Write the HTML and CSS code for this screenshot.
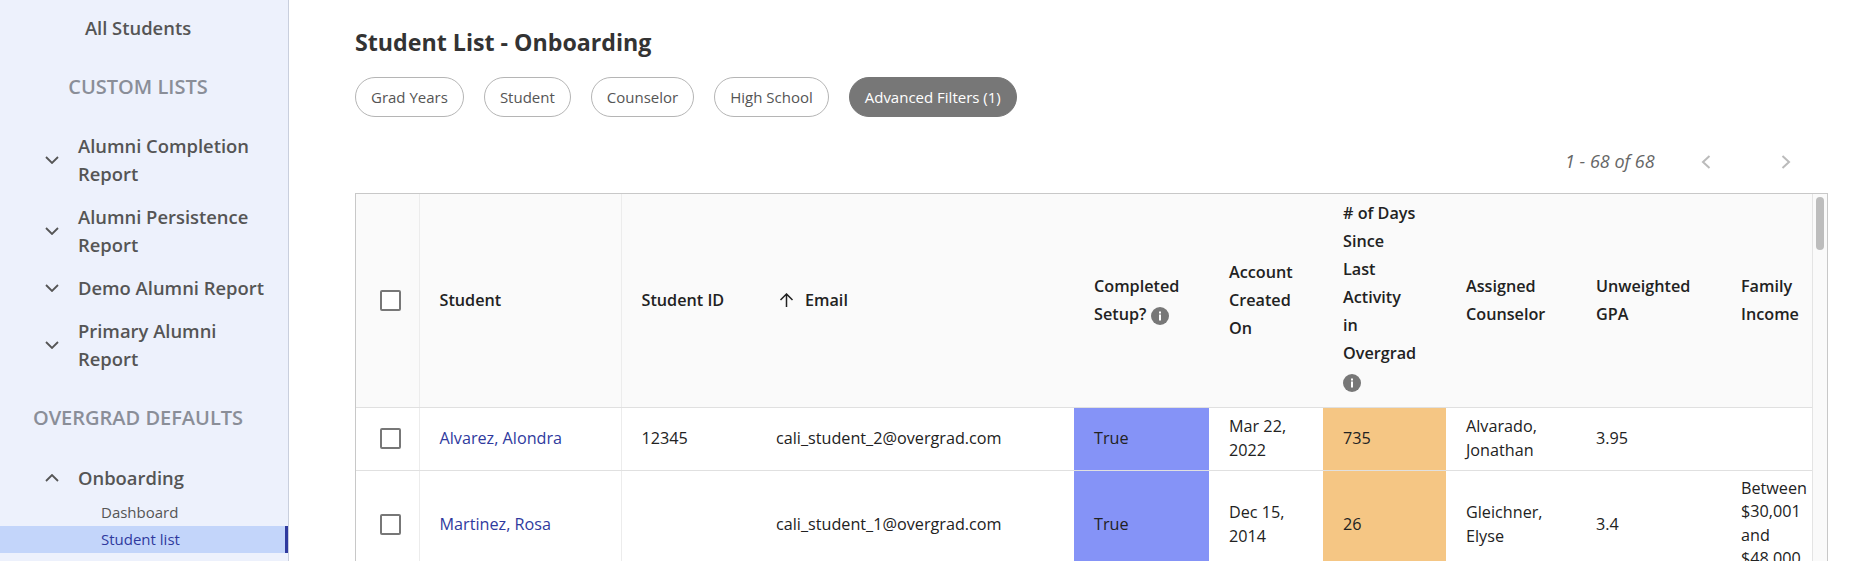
FILE: index.html
```html
<!DOCTYPE html>
<html lang="en">
<head>
    <meta charset="UTF-8">
    <title>Student List - Onboarding</title>
    <link rel="stylesheet" href="styles.css">
</head>
<body>
<div class="page">
    <aside class="sidebar">
        <a class="all-students">All Students</a>
        <div class="group-title custom">CUSTOM LISTS</div>
        <div class="nav-item"><svg class="chev" viewBox="0 0 14 8"><path d="M1 1l6 6 6-6"/></svg><span>Alumni Completion Report</span></div>
        <div class="nav-item"><svg class="chev" viewBox="0 0 14 8"><path d="M1 1l6 6 6-6"/></svg><span>Alumni Persistence Report</span></div>
        <div class="nav-item"><svg class="chev" viewBox="0 0 14 8"><path d="M1 1l6 6 6-6"/></svg><span>Demo Alumni Report</span></div>
        <div class="nav-item"><svg class="chev" viewBox="0 0 14 8"><path d="M1 1l6 6 6-6"/></svg><span>Primary Alumni Report</span></div>
        <div class="group-title defaults">OVERGRAD DEFAULTS</div>
        <div class="nav-item"><svg class="chev" viewBox="0 0 14 8"><path d="M1 7l6-6 6 6"/></svg><span>Onboarding</span></div>
        <a class="sub-item">Dashboard</a>
        <a class="sub-item active">Student list</a>
    </aside>

    <main class="content">
        <h1 class="title">Student List - Onboarding</h1>
        <div class="filters">
            <button class="chip">Grad Years</button>
            <button class="chip">Student</button>
            <button class="chip">Counselor</button>
            <button class="chip">High School</button>
            <button class="chip chip-on">Advanced Filters (1)</button>
        </div>
        <div class="pager">
            <span class="pager-text">1 - 68 of 68</span>
            <svg class="pager-arrow prev" viewBox="0 0 10 14"><path d="M8.5 1L2 7l6.5 6"/></svg>
            <svg class="pager-arrow next" viewBox="0 0 10 14"><path d="M1.5 1L8 7l-6.5 6"/></svg>
        </div>

        <div class="table-box">
            <table class="students">
                <colgroup>
                    <col class="c-check"><col class="c-student"><col class="c-id"><col class="c-email">
                    <col class="c-setup"><col class="c-created"><col class="c-days"><col class="c-counselor">
                    <col class="c-gpa"><col class="c-income">
                </colgroup>
                <thead>
                    <tr>
                        <th class="check-cell"><span class="checkbox"></span></th>
                        <th class="ruled">Student</th>
                        <th>Student ID</th>
                        <th><svg class="sort" viewBox="0 0 15 14"><path d="M7.5 14V1M1.5 7l6-6 6 6"/></svg>Email</th>
                        <th>Completed Setup? <svg class="info" viewBox="0 0 18 18"><circle cx="9" cy="9" r="9"/><rect class="info-i" x="8" y="7.5" width="2" height="6"/><rect class="info-i" x="8" y="4.5" width="2" height="2"/></svg></th>
                        <th>Account Created On</th>
                        <th class="days-head"># of Days Since Last Activity in Overgrad <svg class="info" viewBox="0 0 18 18"><circle cx="9" cy="9" r="9"/><rect class="info-i" x="8" y="7.5" width="2" height="6"/><rect class="info-i" x="8" y="4.5" width="2" height="2"/></svg></th>
                        <th>Assigned Counselor</th>
                        <th>Unweighted GPA</th>
                        <th class="last">Family Income</th>
                    </tr>
                </thead>
                <tbody>
                    <tr>
                        <td class="check-cell"><span class="checkbox"></span></td>
                        <td class="ruled"><a class="name">Alvarez, Alondra</a></td>
                        <td>12345</td>
                        <td>cali_student_2@overgrad.com</td>
                        <td class="blue">True</td>
                        <td>Mar 22, 2022</td>
                        <td class="orange">735</td>
                        <td>Alvarado, Jonathan</td>
                        <td>3.95</td>
                        <td class="last"></td>
                    </tr>
                    <tr>
                        <td class="check-cell"><span class="checkbox"></span></td>
                        <td class="ruled"><a class="name">Martinez, Rosa</a></td>
                        <td></td>
                        <td>cali_student_1@overgrad.com</td>
                        <td class="blue">True</td>
                        <td>Dec 15, 2014</td>
                        <td class="orange">26</td>
                        <td>Gleichner, Elyse</td>
                        <td>3.4</td>
                        <td class="last">Between $30,001 and $48,000</td>
                    </tr>
                </tbody>
            </table>
            <div class="scroll-track"><div class="scroll-thumb"></div></div>
        </div>
    </main>
</div>
</body>
</html>
```

FILE: styles.css
```css
html, body {
    margin: 0;
    height: 561px;
    overflow: hidden;
    background: #fff;
}
body {
    font-family: "Open Sans", Arial, sans-serif;
    color: #222;
}
.page {
    display: flex;
    height: 561px;
    overflow: hidden;
}

/* sidebar */
.sidebar {
    width: 288px;
    flex: none;
    background: #edf1fc;
    border-right: 1px solid #c9cfdd;
    padding-top: 14px;
}
.all-students {
    display: block;
    width: 276px;
    text-align: center;
    font-size: 18.4px;
    font-weight: 600;
    line-height: 28px;
    color: #555;
}
.group-title {
    width: 276px;
    text-align: center;
    font-size: 20px;
    font-weight: 600;
    line-height: 28px;
    color: #8a8e98;
}
.group-title.custom {
    margin-top: 31px;
    margin-bottom: 23px;
}
.group-title.defaults {
    margin-top: 24px;
    margin-bottom: 24px;
}
.nav-item {
    display: flex;
    align-items: center;
    padding: 7.5px 20px 7.5px 45px;
    font-size: 18.4px;
    font-weight: 600;
    line-height: 28px;
    color: #555;
}
.chev {
    width: 14px;
    height: 8px;
    flex: none;
    margin-right: 19px;
    fill: none;
    stroke: #555;
    stroke-width: 1.8;
}
.sub-item {
    display: block;
    padding-left: 101px;
    font-size: 15px;
    line-height: 27px;
    color: #555;
}
.sub-item.active {
    background: #c3d5fa;
    border-right: 3px solid #2f3a9e;
    color: #2f3a9e;
}

/* main */
.content {
    flex: 1;
    padding-left: 66px;
    min-width: 0;
}
.title {
    margin: 26px 0 0;
    font-size: 23.2px;
    font-weight: 700;
    line-height: 32px;
    color: #333;
}
.filters {
    display: flex;
    gap: 20px;
    margin-top: 19px;
}
.chip {
    height: 40px;
    padding: 0 15px;
    border: 1px solid #b5b5b5;
    border-radius: 20px;
    background: #fff;
    font-family: inherit;
    font-size: 15px;
    color: #555;
}
.chip-on {
    background: #777;
    border-color: #777;
    color: #fff;
}
.pager {
    display: flex;
    align-items: center;
    height: 30px;
    margin-top: 29px;
    padding-left: 1210px;
}
.pager-text {
    font-size: 18px;
    font-style: italic;
    color: #666;
}
.pager-arrow {
    width: 10px;
    height: 14px;
    margin-top: 2px;
    fill: none;
    stroke: #bbb;
    stroke-width: 2;
}
.prev {
    margin-left: 46px;
}
.next {
    margin-left: 70px;
}

/* table */
.table-box {
    display: flex;
    width: 1471px;
    height: 420px;
    margin-top: 17px;
    border: 1px solid #c8c8c8;
    overflow: hidden;
}
.students {
    width: 1456px;
    flex: none;
    table-layout: fixed;
    border-collapse: collapse;
    font-size: 16.2px;
    line-height: 23.5px;
    align-self: flex-start;
}
.c-check { width: 63px; }
.c-student { width: 202px; }
.c-id { width: 135px; }
.c-email { width: 318px; }
.c-setup { width: 135px; }
.c-created { width: 114px; }
.c-days { width: 123px; }
.c-counselor { width: 130px; }
.c-gpa { width: 145px; }
.c-income { width: 91px; }
.students th {
    height: 213px;
    padding: 8px 20px;
    box-sizing: border-box;
    background: #fafafa;
    font-weight: 600;
    font-size: 16.2px;
    line-height: 28px;
    text-align: left;
    border-bottom: 1px solid #e0e0e0;
}
.students td {
    height: 63px;
    padding: 6px 20px;
    box-sizing: border-box;
    border-bottom: 1px solid #e0e0e0;
}
.students .days-head {
    padding: 5px 28px 11px 20px;
}
.students .last {
    padding-right: 0;
    padding-bottom: 8px;
}
.students .check-cell {
    padding: 0 0 0 24px;
    border-right: 1px solid #ececec;
}
.students .ruled {
    border-right: 1px solid #ececec;
}
.checkbox {
    display: block;
    width: 21px;
    height: 21px;
    box-sizing: border-box;
    border: 2px solid #777;
    border-radius: 2px;
    background: #fff;
}
.name {
    color: #2f3a9e;
}
.blue {
    background: #8593f7;
}
.orange {
    background: #f5c684;
}
.sort {
    width: 15px;
    height: 14px;
    margin: 0 11px 0 3px;
    vertical-align: -1px;
    fill: none;
    stroke: #222;
    stroke-width: 1.5;
}
.info {
    width: 18px;
    height: 18px;
    vertical-align: -5px;
    fill: #777;
}
.info-i {
    fill: #fff;
}
.scroll-track {
    flex: 1;
    background: #fafafa;
    border-left: 1px solid #e4e4e4;
    padding: 3px 3px 0;
}
.scroll-thumb {
    width: 8px;
    height: 53px;
    border-radius: 4px;
    background: #bdbdbd;
}
```
